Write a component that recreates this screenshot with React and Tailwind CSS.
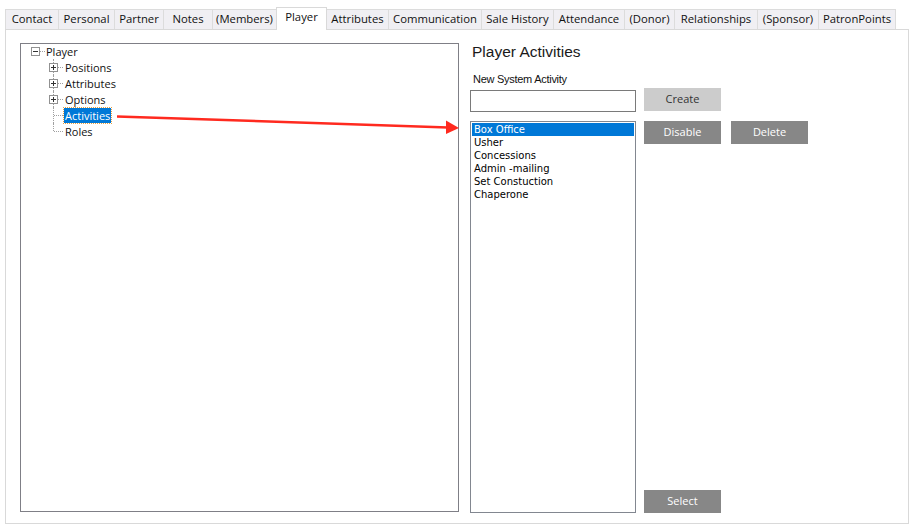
import React from 'react';

const tabs = [
  { label: 'Contact', w: 53 },
  { label: 'Personal', w: 56 },
  { label: 'Partner', w: 49 },
  { label: 'Notes', w: 49 },
  { label: '(Members)', w: 64 },
  { label: 'Player', w: 51, active: true },
  { label: 'Attributes', w: 61 },
  { label: 'Communication', w: 93 },
  { label: 'Sale History', w: 72 },
  { label: 'Attendance', w: 71 },
  { label: '(Donor)', w: 50 },
  { label: 'Relationships', w: 83 },
  { label: '(Sponsor)', w: 61 },
  { label: 'PatronPoints', w: 78, last: true },
];

const activities = ['Box Office', 'Usher', 'Concessions', 'Admin -mailing', 'Set Constuction', 'Chaperone'];

const ExpandBox = ({ minus }) => (
  <div className="relative z-10 w-[9px] h-[9px] border border-[#919191] bg-white flex items-center justify-center">
    <div className="absolute w-[5px] h-px bg-[#333]" />
    {!minus && <div className="absolute w-px h-[5px] bg-[#333]" />}
  </div>
);

const TreeChild = ({ label, expandable, selected, last }) => (
  <div className="flex items-center h-4">
    <div className="relative w-[9px] h-4 flex items-center">
      <div className={`absolute left-[4px] top-0 border-l border-dotted border-[#a0a0a0] ${last ? 'h-2' : 'h-4'}`} />
      {expandable ? <ExpandBox /> : <div className="absolute left-[5px] w-[9px] border-t border-dotted border-[#a0a0a0]" />}
    </div>
    <div className={`w-[5px] ${expandable ? 'border-t border-dotted border-[#a0a0a0]' : ''}`} />
    <span className={`ml-px px-px leading-[15px] h-[15px] ${selected ? 'bg-[#0078d7] text-white outline outline-1 outline-dotted outline-[#e8a040]' : 'text-[#111]'}`}>{label}</span>
  </div>
);

export default function App() {
  return (
    <div className="relative w-[915px] h-[532px] bg-white overflow-hidden" style={{ fontFamily: '"Open Sans", "Noto Sans", sans-serif' }}>
      {/* tab strip */}
      <div className="flex items-end pl-[5px] pt-[7px] text-[11.3px] text-[#111]">
        {tabs.map((t) => (
          <div
            key={t.label}
            style={{ width: t.w }}
            className={t.active
              ? 'relative z-10 h-[23px] -mb-px bg-white border-t border-l border-r border-[#d9d9d9] flex items-center justify-center pb-[3px]'
              : `h-[20px] bg-[#f0eff3] border-t border-[#dcdcdc] flex items-center justify-center ${t.label === 'Attributes' ? '' : 'border-l'} ${t.last ? 'border-r' : ''}`}
          >
            {t.label}
          </div>
        ))}
      </div>

      {/* panel */}
      <div className="ml-[5px] w-[904px] h-[495px] border border-[#d9d9d9] pt-[13px] pl-[14px] flex">
        {/* tree */}
        <div className="w-[439px] h-[469px] border border-[#7f7f86] pl-[10px] text-[11px]">
          <div className="-mt-px flex items-center h-4">
            <ExpandBox minus />
            <div className="w-[5px] border-t border-dotted border-[#a0a0a0]" />
            <span className="ml-px text-[#111] leading-[15px]">Player</span>
          </div>
          <div className="ml-[18px]">
            <TreeChild label="Positions" expandable />
            <TreeChild label="Attributes" expandable />
            <TreeChild label="Options" expandable />
            <TreeChild label="Activities" selected />
            <TreeChild label="Roles" last />
          </div>
        </div>

        {/* right side */}
        <div className="ml-[11px] flex flex-col">
          <div className="-mt-px h-5 leading-5 pl-[2px] text-[15.5px] text-[#1a1a1a]" style={{ fontFamily: '"Liberation Sans", Arial, sans-serif' }}>Player Activities</div>
          <div className="mt-[9px] h-4 leading-4 pl-[3px] text-[11px] text-[#111] tracking-tight" style={{ fontFamily: '"Liberation Sans", Arial, sans-serif' }}>New System Activity</div>
          <div className="mt-px flex">
            <div className="mt-[2px] w-[166px] h-[22px] border border-[#7a7a7a] bg-white" />
            <button className="ml-[8px] w-[77px] h-[23px] bg-[#cccccc] text-[11px] text-[#333]">Create</button>
          </div>
          <div className="mt-[9px] flex">
            <div className="w-[166px] h-[392px] border border-[#828790] p-px text-[10px] text-black" style={{ fontFamily: '"DejaVu Sans", sans-serif' }}>
              {activities.map((a, i) => (
                <div key={a} className={`h-[13px] leading-[13px] px-[2px] ${i === 0 ? 'bg-[#0078d7] text-white' : ''}`}>{a}</div>
              ))}
            </div>
            <div className="ml-[8px] flex flex-col justify-between h-[392px]">
              <div className="flex gap-[10px]">
                <button className="w-[77px] h-[23px] bg-[#878787] text-[11px] text-white">Disable</button>
                <button className="w-[77px] h-[23px] bg-[#878787] text-[11px] text-white">Delete</button>
              </div>
              <button className="w-[77px] h-[23px] bg-[#878787] text-[11px] text-white">Select</button>
            </div>
          </div>
        </div>
      </div>

      {/* annotation arrow */}
      <svg className="absolute inset-0 pointer-events-none" width="915" height="532">
        <line x1="117" y1="116.5" x2="448" y2="127.5" stroke="#ff2a1f" strokeWidth="2.5" />
        <polygon points="446,120.5 459,128 446,134" fill="#ff2a1f" />
      </svg>
    </div>
  );
}
